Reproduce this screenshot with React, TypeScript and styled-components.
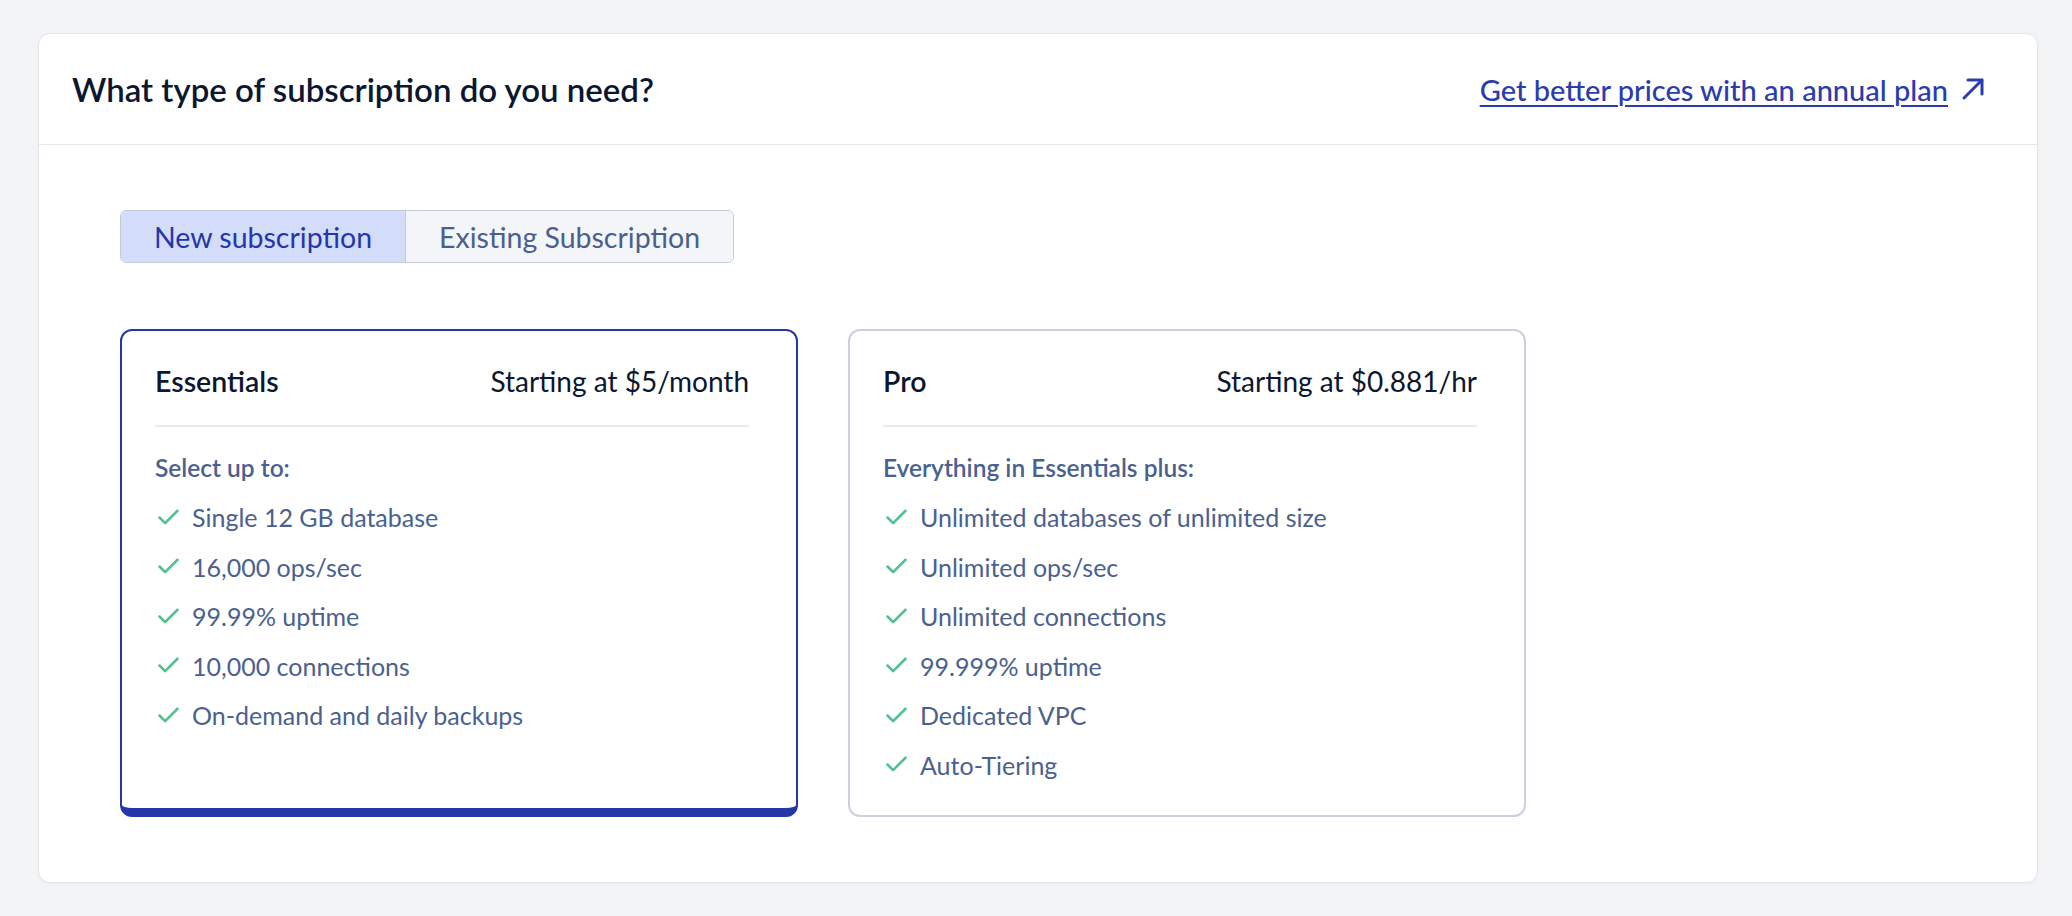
import React, { useState } from "react";
import styled, { createGlobalStyle } from "styled-components";
import { Check } from "lucide-react";

const GlobalStyle = createGlobalStyle`
  body {
    margin: 0;
    background-color: #f3f4f6;
    font-family: "Lato", "Noto Sans", sans-serif;
  }
`;

const Page = styled.main`
  padding: 33px 34px 36px 38px;
`;

const Panel = styled.section`
  background-color: #ffffff;
  border: 1px solid #e4e6ea;
  border-radius: 12px;
  box-shadow: 0 1px 3px rgba(16, 24, 40, 0.04);
`;

const Header = styled.header`
  display: flex;
  justify-content: space-between;
  align-items: center;
  height: 110px;
  padding: 0 52px 0 33px;
  border-bottom: 1px solid #e6e8ec;
`;

const Title = styled.h1`
  margin: 0;
  font-size: 33px;
  font-weight: 600;
  color: #0b1730;
`;

const AnnualLink = styled.a`
  display: flex;
  align-items: center;
  gap: 13px;
  color: #2a3cae;
  font-size: 29px;
  font-weight: 500;
  text-decoration: none;
  cursor: pointer;

  span {
    text-decoration: underline;
    text-underline-offset: 4px;
    text-decoration-thickness: 2px;
  }
`;

const ArrowIcon = styled.svg`
  width: 24px;
  height: 24px;
  flex-shrink: 0;
`;

const Body = styled.div`
  padding: 65px 81px 65px;
`;

const Toggle = styled.div`
  display: inline-flex;
  border: 1.5px solid #c3cbd9;
  border-radius: 6px;
  overflow: hidden;
`;

const ToggleButton = styled.button<{ $active: boolean }>`
  height: 51px;
  padding: 0 33px;
  border: none;
  border-left: ${(p) => (p.$active ? "none" : "1.5px solid #c3cbd9")};
  background-color: ${(p) => (p.$active ? "#d3ddf9" : "#f3f5f8")};
  color: ${(p) => (p.$active ? "#2537a8" : "#4a5f8c")};
  font-family: inherit;
  font-size: 28.5px;
  cursor: pointer;
`;

const Plans = styled.div`
  display: flex;
  gap: 50px;
  margin-top: 66px;
`;

const PlanCard = styled.article<{ $selected: boolean }>`
  box-sizing: border-box;
  width: 678px;
  min-height: 488px;
  padding: 36px 47px 38px 33px;
  border: ${(p) => (p.$selected ? "2px solid #2537a8" : "2px solid #cad1dd")};
  border-bottom-width: ${(p) => (p.$selected ? "9px" : "2px")};
  border-radius: 12px;
  background-color: #ffffff;
  cursor: pointer;
`;

const PlanHead = styled.div`
  display: flex;
  justify-content: space-between;
  align-items: center;
  height: 28px;
  padding-bottom: 30px;
  border-bottom: 2px solid #e8eaef;
  color: #0b1730;
  font-size: 28px;
`;

const PlanName = styled.span`
  font-weight: 600;
  font-size: 28.5px;
`;

const Lead = styled.div`
  margin-top: 29px;
  color: #4a6190;
  font-size: 24.5px;
  font-weight: 600;
  line-height: 24px;
`;

const Features = styled.ul`
  list-style: none;
  margin: 25px 0 0;
  padding: 0;
  display: flex;
  flex-direction: column;
  gap: 25.5px;
`;

const Feature = styled.li`
  display: flex;
  align-items: center;
  gap: 10px;
  height: 24px;
  line-height: 24px;
  color: #4a6190;
  font-size: 25px;

  svg {
    color: #52c08f;
    flex-shrink: 0;
  }
`;

const plans = [
  {
    id: "essentials",
    name: "Essentials",
    price: "Starting at $5/month",
    lead: "Select up to:",
    features: [
      "Single 12 GB database",
      "16,000 ops/sec",
      "99.99% uptime",
      "10,000 connections",
      "On-demand and daily backups",
    ],
  },
  {
    id: "pro",
    name: "Pro",
    price: "Starting at $0.881/hr",
    lead: "Everything in Essentials plus:",
    features: [
      "Unlimited databases of unlimited size",
      "Unlimited ops/sec",
      "Unlimited connections",
      "99.999% uptime",
      "Dedicated VPC",
      "Auto-Tiering",
    ],
  },
];

const App: React.FC = () => {
  const [mode, setMode] = useState("new");
  const [selected, setSelected] = useState("essentials");

  return (
    <Page>
      <GlobalStyle />
      <Panel>
        <Header>
          <Title>What type of subscription do you need?</Title>
          <AnnualLink>
            <span>Get better prices with an annual plan</span>
            <ArrowIcon viewBox="0 0 24 24" fill="none" stroke="currentColor" strokeWidth="3" strokeLinecap="round" strokeLinejoin="round">
              <path d="M3 21 21 3" />
              <path d="M7 3h14v14" />
            </ArrowIcon>
          </AnnualLink>
        </Header>
        <Body>
          <Toggle>
            <ToggleButton $active={mode === "new"} onClick={() => setMode("new")}>
              New subscription
            </ToggleButton>
            <ToggleButton
              $active={mode === "existing"}
              onClick={() => setMode("existing")}
            >
              Existing Subscription
            </ToggleButton>
          </Toggle>
          <Plans>
            {plans.map((plan) => (
              <PlanCard
                key={plan.id}
                $selected={plan.id === selected}
                onClick={() => setSelected(plan.id)}
              >
                <PlanHead>
                  <PlanName>{plan.name}</PlanName>
                  <span>{plan.price}</span>
                </PlanHead>
                <Lead>{plan.lead}</Lead>
                <Features>
                  {plan.features.map((feature) => (
                    <Feature key={feature}>
                      <Check size={27} strokeWidth={2.3} />
                      {feature}
                    </Feature>
                  ))}
                </Features>
              </PlanCard>
            ))}
          </Plans>
        </Body>
      </Panel>
    </Page>
  );
};

export default App;
